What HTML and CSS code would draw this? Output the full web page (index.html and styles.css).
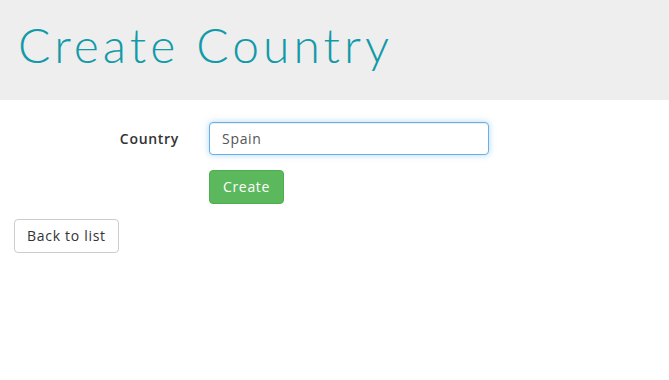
FILE: index.html
```html
<!DOCTYPE html>
<html lang="en">
<head>
    <meta charset="UTF-8">
    <meta name="viewport" content="width=device-width, initial-scale=1.0">
    <title>Create Country</title>
    <link rel="stylesheet" href="styles.css">
</head>
<body>
    <header class="page-header">
        <h1>Create Country</h1>
    </header>

    <main class="content">
        <form class="form-horizontal">
            <div class="form-group">
                <label class="control-label" for="country">Country</label>
                <div class="field">
                    <input type="text" id="country" class="form-control focused" value="Spain">
                </div>
            </div>
            <div class="form-group">
                <div class="control-label"></div>
                <div class="field">
                    <button type="button" class="btn btn-success">Create</button>
                </div>
            </div>
        </form>

        <div class="back-row">
            <a href="#" class="btn btn-default">Back to list</a>
        </div>
    </main>
</body>
</html>
```

FILE: styles.css
```css
/* General */
body {
    margin: 0;
    font-family: "Open Sans", Lato, sans-serif;
    font-size: 14px;
    letter-spacing: 0.7px;
    color: #333;
    background-color: white;
}

/* Header band */
.page-header {
    background-color: #eeeeee;
    height: 100px;
    box-sizing: border-box;
    display: flex;
    align-items: center;
    padding: 0 0 11px 18px;
}

.page-header h1 {
    margin: 0;
    font-family: Lato, sans-serif;
    font-size: 48px;
    font-weight: 300;
    color: #129aa8;
    letter-spacing: 4px;
}

/* Form */
.content {
    padding: 22px 14px 0 14px;
}

.form-group {
    display: flex;
    align-items: center;
    margin-bottom: 15px;
}

.control-label {
    width: 165px;
    text-align: right;
    font-weight: 600;
    padding-right: 30px;
}

.field {
    width: 280px;
}

.form-control {
    box-sizing: border-box;
    width: 100%;
    height: 33px;
    padding: 6px 12px;
    font-family: inherit;
    font-size: 14px;
    letter-spacing: inherit;
    color: #555;
    border: 1px solid #ccc;
    border-radius: 4px;
}

.form-control.focused,
.form-control:focus {
    outline: none;
    border-color: #66afe9;
    box-shadow: inset 0 1px 1px rgba(0, 0, 0, 0.075), 0 0 6px rgba(102, 175, 233, 0.5);
}

/* Buttons */
.btn {
    display: inline-block;
    box-sizing: border-box;
    height: 34px;
    padding: 6px 12px;
    font-family: inherit;
    font-size: 14px;
    letter-spacing: inherit;
    line-height: 20px;
    border: 1px solid transparent;
    border-radius: 4px;
    text-decoration: none;
    cursor: pointer;
}

.btn-success {
    width: 75px;
    color: white;
    background-color: #5cb85c;
    border-color: #4cae4c;
}

.btn-default {
    color: #333;
    background-color: white;
    border-color: #ccc;
}
```
